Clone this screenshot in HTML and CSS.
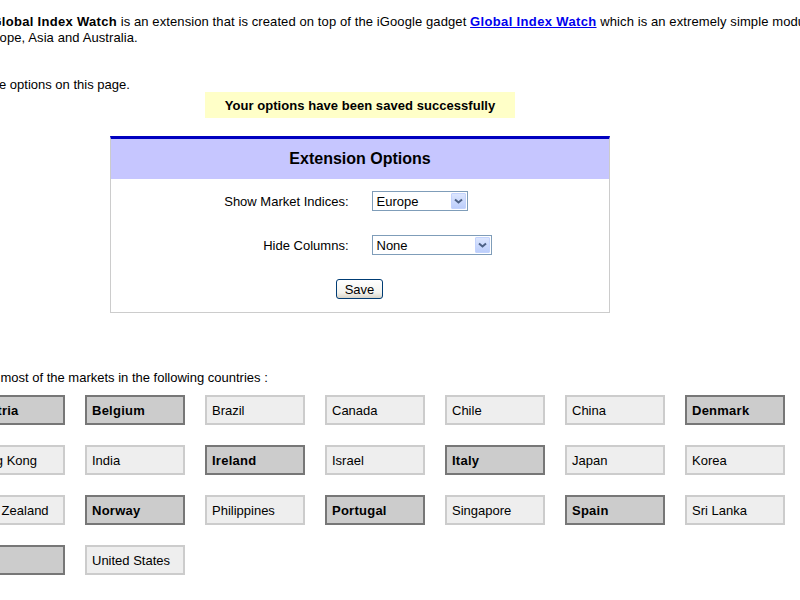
FILE: index.html
```html
<!DOCTYPE html>
<html>
<head>
<meta charset="utf-8">
<title>Global Index Watch - Options</title>
<link rel="stylesheet" href="styles.css">
</head>
<body>
<div class="page">
  <p class="intro">The <b>Global Index Watch</b> is an extension that is created on top of the iGoogle gadget <a href="#">Global Index Watch</a> which is an extremely simple module to keep a track of the major stock market indices in the Americas,<br>in Europe, Asia and Australia.</p>
  <p class="note">Set the options on this page.</p>
  <div class="center">
    <div class="saved">Your options have been saved successfully</div>
    <div class="options">
      <div class="options-head">Extension Options</div>
      <div class="options-body">
        <span class="label">Show Market Indices:</span>
        <div class="select select-short"><span class="select-text">Europe</span><span class="select-arrow"><svg width="9" height="6" viewBox="0 0 9 6"><path d="M1 1.5 L4.5 4.5 L8 1.5" fill="none" stroke="#4d6185" stroke-width="2"/></svg></span></div>
        <span class="label">Hide Columns:</span>
        <div class="select select-long"><span class="select-text">None</span><span class="select-arrow"><svg width="9" height="6" viewBox="0 0 9 6"><path d="M1 1.5 L4.5 4.5 L8 1.5" fill="none" stroke="#4d6185" stroke-width="2"/></svg></span></div>
        <div class="actions"><button class="save" type="button">Save</button></div>
      </div>
    </div>
  </div>
  <p class="markets-intro">It has most of the markets in the following countries :</p>
  <div class="tiles">
    <div class="tile on">Austria</div>
    <div class="tile on">Belgium</div>
    <div class="tile">Brazil</div>
    <div class="tile">Canada</div>
    <div class="tile">Chile</div>
    <div class="tile">China</div>
    <div class="tile on">Denmark</div>
    <div class="tile on">Finland</div>
    <div class="tile on">France</div>
    <div class="tile on">Germany</div>
    <div class="tile on">Greece</div>
    <div class="tile">Hong Kong</div>
    <div class="tile">India</div>
    <div class="tile on">Ireland</div>
    <div class="tile">Israel</div>
    <div class="tile on">Italy</div>
    <div class="tile">Japan</div>
    <div class="tile">Korea</div>
    <div class="tile on">Luxembourg</div>
    <div class="tile">Malaysia</div>
    <div class="tile">Mexico</div>
    <div class="tile on">Netherlands</div>
    <div class="tile">New Zealand</div>
    <div class="tile on">Norway</div>
    <div class="tile">Philippines</div>
    <div class="tile on">Portugal</div>
    <div class="tile">Singapore</div>
    <div class="tile on">Spain</div>
    <div class="tile">Sri Lanka</div>
    <div class="tile on">Sweden</div>
    <div class="tile on">Switzerland</div>
    <div class="tile">Taiwan</div>
    <div class="tile">Thailand</div>
    <div class="tile on">UK</div>
    <div class="tile">United States</div>
  </div>
</div>
</body>
</html>
```
FILE: styles.css
```css
html, body {
  margin: 0;
  padding: 0;
  overflow: hidden;
  background: #fff;
}
body {
  font-family: "Liberation Sans", Arial, sans-serif;
  font-size: 13px;
  line-height: 16px;
  color: #000;
}
.page {
  margin-left: -35px;
  width: 1400px;
}
.intro {
  margin: 14px 0 0;
  letter-spacing: 0.1px;
}
.intro b {
  letter-spacing: 0.3px;
}
.intro a {
  color: #0000ee;
  font-weight: bold;
  letter-spacing: 0.35px;
}
.note {
  margin: 31px 0 0;
  line-height: 15px;
}
.center {
  width: 790px;
}
.saved {
  width: 310px;
  height: 26px;
  box-sizing: border-box;
  margin: 0 auto;
  padding-top: 1px;
  background: #ffffc8;
  font-weight: bold;
  line-height: 25px;
  text-align: center;
  letter-spacing: 0.05px;
}
.options {
  width: 500px;
  box-sizing: border-box;
  margin: 18px auto 0;
  border: 1px solid #cccccc;
  border-top: 3px solid #0000c0;
}
.options-head {
  height: 40px;
  line-height: 40px;
  background: #c6c6ff;
  text-align: center;
  font-size: 16px;
  font-weight: bold;
}
.options-body {
  display: grid;
  grid-template-columns: 1fr 1fr;
  grid-auto-rows: 20px;
  column-gap: 23px;
  row-gap: 24px;
  padding: 12px 0 13px;
  align-items: center;
}
.label {
  text-align: right;
  padding-top: 1px;
}
.select {
  display: flex;
  align-items: center;
  justify-content: space-between;
  box-sizing: border-box;
  height: 20px;
  border: 1px solid #7f9db9;
  background: #fff;
  padding: 1px 1px 0 4px;
}
.select-arrow {
  margin-top: -1px;
}
.select-short { width: 96px; }
.select-long { width: 120px; }
.select-arrow {
  display: flex;
  align-items: center;
  justify-content: center;
  box-sizing: border-box;
  width: 15px;
  height: 16px;
  border: 1px solid #c3d3fd;
  border-radius: 1px;
  background: linear-gradient(#dce6fe, #bccefb);
}
.actions {
  grid-column: 1 / 3;
  display: flex;
  justify-content: center;
}
.save {
  box-sizing: border-box;
  width: 47px;
  height: 20px;
  padding: 1px 0 0;
  border: 1px solid #003c74;
  border-radius: 3px;
  background: linear-gradient(#ffffff, #f3f3ee 70%, #d8d4c8);
  font-family: "Liberation Sans", Arial, sans-serif;
  font-size: 13px;
  color: #000;
  margin-left: -1px;
}
.markets-intro {
  margin: 57px 0 0;
}
.tiles {
  display: grid;
  grid-template-columns: repeat(11, 100px);
  grid-auto-rows: 30px;
  gap: 20px;
  margin-top: 9px;
}
.tile {
  box-sizing: border-box;
  border: 2px solid #cccccc;
  background: #eeeeee;
  padding: 1px 0 0 5px;
  line-height: 25px;
  white-space: nowrap;
  overflow: hidden;
}
.tile.on {
  border-color: #777777;
  background: #cccccc;
  font-weight: bold;
  letter-spacing: 0.25px;
}
```
